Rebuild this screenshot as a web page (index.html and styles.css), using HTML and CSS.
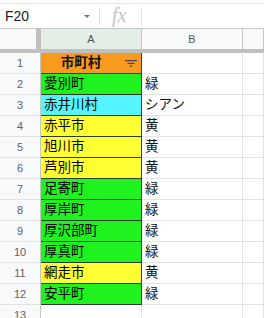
FILE: index.html
```html
<!DOCTYPE html>
<html lang="ja">
<head>
    <meta charset="UTF-8">
    <title>Sheet</title>
    <link rel="stylesheet" href="styles.css">
</head>
<body>
    <div class="formula-bar">
        <div class="name-box">
            <span class="cell-ref">F20</span>
            <span class="caret"></span>
        </div>
        <div class="fx">fx</div>
        <div class="formula-input"></div>
    </div>

    <div class="sheet">
        <!-- column headers -->
        <div class="corner"></div>
        <div class="col-head filtered">A</div>
        <div class="col-head">B</div>
        <div class="col-head"></div>

        <div class="row-num">1</div>
        <div class="cell title">
            市町村
            <svg class="filter-icon" width="12" height="7" viewBox="0 0 12 7">
                <rect x="0" y="0" width="12" height="1.2" fill="#444"/>
                <rect x="2.5" y="2.8" width="7" height="1.2" fill="#444"/>
                <rect x="4.8" y="5.6" width="2.4" height="1.2" fill="#444"/>
            </svg>
        </div>
        <div class="cell"></div>
        <div class="cell"></div>

        <div class="row-num">2</div>
        <div class="cell fill green">愛別町</div>
        <div class="cell">緑</div>
        <div class="cell"></div>

        <div class="row-num">3</div>
        <div class="cell fill cyan">赤井川村</div>
        <div class="cell">シアン</div>
        <div class="cell"></div>

        <div class="row-num">4</div>
        <div class="cell fill yellow">赤平市</div>
        <div class="cell">黄</div>
        <div class="cell"></div>

        <div class="row-num">5</div>
        <div class="cell fill yellow">旭川市</div>
        <div class="cell">黄</div>
        <div class="cell"></div>

        <div class="row-num">6</div>
        <div class="cell fill yellow">芦別市</div>
        <div class="cell">黄</div>
        <div class="cell"></div>

        <div class="row-num">7</div>
        <div class="cell fill green">足寄町</div>
        <div class="cell">緑</div>
        <div class="cell"></div>

        <div class="row-num">8</div>
        <div class="cell fill green">厚岸町</div>
        <div class="cell">緑</div>
        <div class="cell"></div>

        <div class="row-num">9</div>
        <div class="cell fill green">厚沢部町</div>
        <div class="cell">緑</div>
        <div class="cell"></div>

        <div class="row-num">10</div>
        <div class="cell fill green">厚真町</div>
        <div class="cell">緑</div>
        <div class="cell"></div>

        <div class="row-num">11</div>
        <div class="cell fill yellow">網走市</div>
        <div class="cell">黄</div>
        <div class="cell"></div>

        <div class="row-num">12</div>
        <div class="cell fill green">安平町</div>
        <div class="cell">緑</div>
        <div class="cell"></div>

        <div class="row-num">13</div>
        <div class="cell"></div>
        <div class="cell"></div>
        <div class="cell"></div>
    </div>
</body>
</html>
```

FILE: styles.css
```css
* {
    box-sizing: border-box;
    margin: 0;
    padding: 0;
}
body {
    font-family: "Liberation Sans", "Noto Sans CJK JP", Arial, sans-serif;
    background: #fff;
    width: 264px;
    overflow: hidden;
}

/* Formula bar */
.formula-bar {
    display: flex;
    height: 26px;
    margin-top: 3px;
    border-top: 1px solid #e3e3e3;
    border-bottom: 1px solid #c7c7c7;
    align-items: center;
}
.name-box {
    width: 99px;
    display: flex;
    align-items: center;
    justify-content: space-between;
    padding: 0 9px 0 5px;
}
.cell-ref {
    font-size: 14px;
    color: #222;
}
.caret {
    width: 0;
    height: 0;
    border-left: 3px solid transparent;
    border-right: 3px solid transparent;
    border-top: 3px solid #777;
}
.fx {
    width: 43px;
    height: 18px;
    border-left: 1px solid #e0e0e0;
    border-right: 1px solid #e0e0e0;
    font-family: "Liberation Serif", serif;
    font-style: italic;
    font-size: 20px;
    line-height: 16px;
    color: #c4c4c4;
    padding-left: 12px;
}
.formula-input {
    flex: 1;
}

/* Sheet grid */
.sheet {
    display: grid;
    grid-template-columns: 41px 101px 101px 1fr;
    grid-auto-rows: 21px;
    grid-template-rows: 24px;
}
.corner {
    background: #f8f9fa;
    border-right: 5px solid #c0c0c0;
    border-bottom: 4px solid #c0c0c0;
}
.col-head {
    background: #f8f9fa;
    border-right: 1px solid #c4c7c5;
    border-bottom: 4px solid #c0c0c0;
    font-size: 11px;
    color: #555;
    text-align: center;
    line-height: 20px;
}
.col-head.filtered {
    background: #e3efe6;
}
.row-num {
    background: #f8f9fa;
    border-right: 1px solid #c4c7c5;
    border-bottom: 1px solid #e1e3e1;
    font-size: 11px;
    color: #5f6368;
    text-align: center;
    line-height: 20px;
}
.cell {
    border-right: 1px solid #e2e3e3;
    border-bottom: 1px solid #e2e3e3;
    font-size: 13.5px;
    line-height: 20px;
    padding-left: 3px;
    color: #111;
    white-space: nowrap;
    overflow: hidden;
}
.cell.title {
    position: relative;
    background: #f79a1e;
    font-weight: bold;
    text-align: center;
    padding: 0 20px 0 0;
    border-right: 1px solid #3a3a2a;
    border-bottom: 1px solid #3a3a2a;
}
.filter-icon {
    position: absolute;
    right: 4px;
    top: 7px;
}
.cell.fill {
    border-right: 1px solid #2e3a2e;
    border-bottom: 1px solid #2e3a2e;
    color: #000;
}
.green {
    background: #1ff21f;
}
.cyan {
    background: #55f5ff;
}
.yellow {
    background: #ffff33;
}
```
